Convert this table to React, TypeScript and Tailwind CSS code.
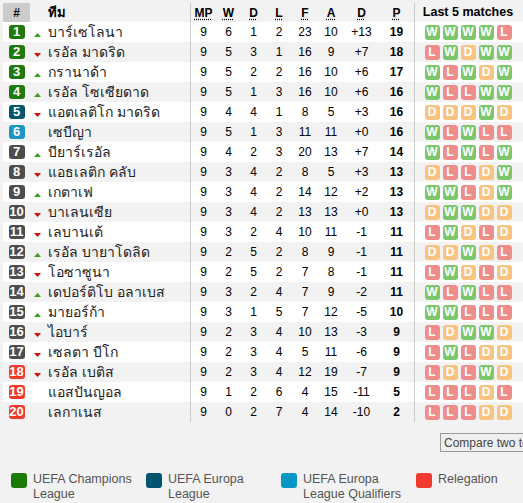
import React from 'react';

type Row = {
  rank: number;
  team: string;
  move: 'up' | 'down' | null;
  mp: number;
  w: number;
  d: number;
  l: number;
  f: number;
  a: number;
  gd: string;
  p: number;
  form: string;
};

const rows: Row[] = [
  { rank: 1, team: 'บาร์เซโลนา', move: 'up', mp: 9, w: 6, d: 1, l: 2, f: 23, a: 10, gd: '+13', p: 19, form: 'WWWWL' },
  { rank: 2, team: 'เรอัล มาดริด', move: 'down', mp: 9, w: 5, d: 3, l: 1, f: 16, a: 9, gd: '+7', p: 18, form: 'LWDWW' },
  { rank: 3, team: 'กรานาด้า', move: 'up', mp: 9, w: 5, d: 2, l: 2, f: 16, a: 10, gd: '+6', p: 17, form: 'WLWDW' },
  { rank: 4, team: 'เรอัล โซเซียดาด', move: 'up', mp: 9, w: 5, d: 1, l: 3, f: 16, a: 10, gd: '+6', p: 16, form: 'WLLWW' },
  { rank: 5, team: 'แอตเลติโก มาดริด', move: 'down', mp: 9, w: 4, d: 4, l: 1, f: 8, a: 5, gd: '+3', p: 16, form: 'DDDWD' },
  { rank: 6, team: 'เซบีญา', move: null, mp: 9, w: 5, d: 1, l: 3, f: 11, a: 11, gd: '+0', p: 16, form: 'WLWLL' },
  { rank: 7, team: 'บียาร์เรอัล', move: 'up', mp: 9, w: 4, d: 2, l: 3, f: 20, a: 13, gd: '+7', p: 14, form: 'WLWLW' },
  { rank: 8, team: 'แอธเลติก คลับ', move: 'down', mp: 9, w: 3, d: 4, l: 2, f: 8, a: 5, gd: '+3', p: 13, form: 'DLLDW' },
  { rank: 9, team: 'เกตาเฟ', move: 'up', mp: 9, w: 3, d: 4, l: 2, f: 14, a: 12, gd: '+2', p: 13, form: 'WWLDW' },
  { rank: 10, team: 'บาเลนเซีย', move: 'down', mp: 9, w: 3, d: 4, l: 2, f: 13, a: 13, gd: '+0', p: 13, form: 'DWWDD' },
  { rank: 11, team: 'เลบานเต้', move: 'down', mp: 9, w: 3, d: 2, l: 4, f: 10, a: 11, gd: '-1', p: 11, form: 'LWDLD' },
  { rank: 12, team: 'เรอัล บายาโดลิด', move: 'up', mp: 9, w: 2, d: 5, l: 2, f: 8, a: 9, gd: '-1', p: 11, form: 'DDWDL' },
  { rank: 13, team: 'โอซาซูนา', move: 'down', mp: 9, w: 2, d: 5, l: 2, f: 7, a: 8, gd: '-1', p: 11, form: 'LWDLD' },
  { rank: 14, team: 'เดปอร์ติโบ อลาเบส', move: 'up', mp: 9, w: 3, d: 2, l: 4, f: 7, a: 9, gd: '-2', p: 11, form: 'WLWLL' },
  { rank: 15, team: 'มายอร์ก้า', move: 'up', mp: 9, w: 3, d: 1, l: 5, f: 7, a: 12, gd: '-5', p: 10, form: 'WWLLL' },
  { rank: 16, team: 'ไอบาร์', move: 'down', mp: 9, w: 2, d: 3, l: 4, f: 10, a: 13, gd: '-3', p: 9, form: 'LDWWD' },
  { rank: 17, team: 'เซลตา บีโก', move: 'down', mp: 9, w: 2, d: 3, l: 4, f: 5, a: 11, gd: '-6', p: 9, form: 'LWLDD' },
  { rank: 18, team: 'เรอัล เบติส', move: 'down', mp: 9, w: 2, d: 3, l: 4, f: 12, a: 19, gd: '-7', p: 9, form: 'LDLWD' },
  { rank: 19, team: 'แอสปันญอล', move: null, mp: 9, w: 1, d: 2, l: 6, f: 4, a: 15, gd: '-11', p: 5, form: 'LLLDL' },
  { rank: 20, team: 'เลกาเนส', move: null, mp: 9, w: 0, d: 2, l: 7, f: 4, a: 14, gd: '-10', p: 2, form: 'LLLDD' },
];

const rankColor = (r: number) => {
  if (r <= 4) return 'bg-[#1f7a0e]';
  if (r === 5) return 'bg-[#07566f]';
  if (r === 6) return 'bg-[#1b94c6]';
  if (r >= 18) return 'bg-[#ef3a2e]';
  return 'bg-[#4d4d4d]';
};

const formColor: Record<string, string> = {
  W: 'bg-[#7cc66c]',
  L: 'bg-[#ef8d8b]',
  D: 'bg-[#f9c382]',
};

const Arrow = ({ move }: { move: 'up' | 'down' | null }) => {
  if (!move) return <span className="w-[7px]" />;
  return (
    <svg width="7" height="4" viewBox="0 0 7 4" className="mt-[5px]">
      {move === 'up' ? <polygon points="0,4 7,4 3.5,0" fill="#3b9a1c" /> : <polygon points="0,0 7,0 3.5,4" fill="#d40d0d" />}
    </svg>
  );
};

const statCols = ['w-[25px]', 'w-[25px]', 'w-[25px]', 'w-[26px]', 'w-[26px]', 'w-[26px]', 'w-[35px]'];

const legend = [
  { color: 'bg-[#1c7a07]', label: 'UEFA Champions League' },
  { color: 'bg-[#015570]', label: 'UEFA Europa League' },
  { color: 'bg-[#0896c6]', label: 'UEFA Europa League Qualifiers' },
  { color: 'bg-[#f13a2f]', label: 'Relegation' },
];

export default function App() {
  return (
    <div className="w-[523px] h-[503px] overflow-hidden bg-[#f2f2f2] pt-[3px] pl-[3px] font-['Liberation_Sans',Arial,sans-serif] text-black">
      <div className="w-[560px]">
        {/* header */}
        <div className="flex h-[19px] items-center text-[12px] font-bold">
          <div className="w-[27px] h-full bg-[#cccccc] flex items-center justify-center">#</div>
          <div className="w-[160px] pl-[18px] text-[13px]">ทีม</div>
          <div className="flex h-full border-l border-[#cccccc]">
            {['MP', 'W', 'D', 'L', 'F', 'A', 'D'].map((h, i) => (
              <div key={i} className={`${statCols[i]} flex items-center justify-center`}>
                <span className="underline decoration-dotted underline-offset-2">{h}</span>
              </div>
            ))}
            <div className="w-[35px] flex items-center justify-center">
              <span className="underline decoration-dotted underline-offset-2">P</span>
            </div>
          </div>
          <div className="w-[107px] h-full border-l border-[#cccccc] flex items-center justify-center text-[12.5px]">Last 5 matches</div>
        </div>

        {rows.map((r, idx) => (
          <div key={r.rank} className={`flex h-5 items-center ${idx % 2 === 0 ? 'bg-white' : 'bg-[#f2f2f2]'}`}>
            <div className="w-[27px] flex justify-center">
              <span className={`${rankColor(r.rank)} w-4 h-[14px] rounded-[3px] text-white text-[13px] font-bold leading-[14px] flex items-center justify-center`}>
                {r.rank}
              </span>
            </div>
            <div className="w-[160px] flex items-center pl-[4px] gap-[7px]">
              <Arrow move={r.move} />
              <span className="text-[14px] text-[#222] whitespace-nowrap">{r.team}</span>
            </div>
            <div className="flex h-full items-center border-l border-[#cccccc] text-[12px]">
              {[r.mp, r.w, r.d, r.l, r.f, r.a, r.gd].map((v, i) => (
                <div key={i} className={`${statCols[i]} text-center`}>{v}</div>
              ))}
              <div className="w-[35px] text-center font-bold">{r.p}</div>
            </div>
            <div className="w-[107px] h-full border-l border-[#cccccc] flex items-center justify-center gap-[3px]">
              {r.form.split('').map((c, i) => (
                <span key={i} className={`${formColor[c]} w-[15px] h-[15px] rounded-[3px] text-white text-[12px] font-bold flex items-center justify-center`}>
                  {c}
                </span>
              ))}
            </div>
          </div>
        ))}

        <div className="flex pl-[437px] pt-[11px]">
          <button className="h-[19px] px-[3px] border border-[#999] bg-[#efefef] text-[12px] text-[#444] leading-none whitespace-nowrap">
            Compare two teams
          </button>
        </div>

        <div className="flex pl-[8px] pt-[21px]">
          {legend.map((l) => (
            <div key={l.label} className="w-[135px] flex items-start gap-[6px]">
              <span className={`${l.color} w-4 h-[15px] rounded-[3px] shrink-0`} />
              <span className="text-[12.5px] leading-[15px] text-[#555] -mt-[1px] w-[108px]">{l.label}</span>
            </div>
          ))}
        </div>
      </div>
    </div>
  );
}
